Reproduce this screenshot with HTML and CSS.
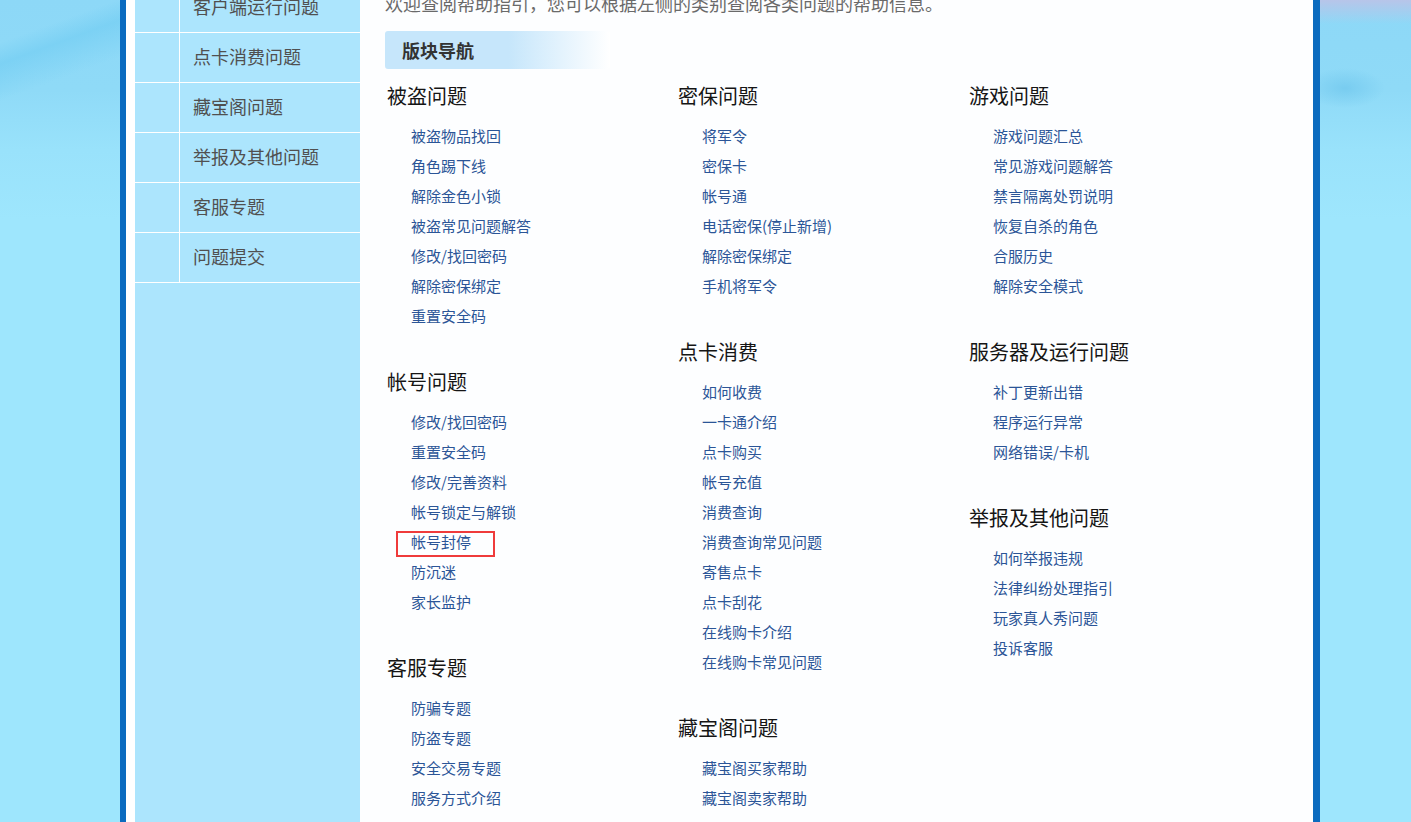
FILE: index.html
```html
<!DOCTYPE html>
<html lang="zh-CN">
<head>
<meta charset="utf-8">
<title>帮助指引</title>
<link rel="stylesheet" href="styles.css">
</head>
<body>
<div class="frame">
  <aside class="sidebar">
    <ul class="side-menu">
      <li><span class="side-icon"></span><a href="#">客户端运行问题</a></li>
      <li><span class="side-icon"></span><a href="#">点卡消费问题</a></li>
      <li><span class="side-icon"></span><a href="#">藏宝阁问题</a></li>
      <li><span class="side-icon"></span><a href="#">举报及其他问题</a></li>
      <li><span class="side-icon"></span><a href="#">客服专题</a></li>
      <li><span class="side-icon"></span><a href="#">问题提交</a></li>
    </ul>
  </aside>
  <main class="content">
    <p class="intro">欢迎查阅帮助指引，您可以根据左侧的类别查阅各类问题的帮助信息。</p>
    <h2 class="nav-title">版块导航</h2>
    <div class="columns">
      <div class="col">
        <section class="block">
          <h3>被盗问题</h3>
          <ul>
            <li><a href="#">被盗物品找回</a></li>
            <li><a href="#">角色踢下线</a></li>
            <li><a href="#">解除金色小锁</a></li>
            <li><a href="#">被盗常见问题解答</a></li>
            <li><a href="#">修改/找回密码</a></li>
            <li><a href="#">解除密保绑定</a></li>
            <li><a href="#">重置安全码</a></li>
          </ul>
        </section>
        <section class="block">
          <h3>帐号问题</h3>
          <ul>
            <li><a href="#">修改/找回密码</a></li>
            <li><a href="#">重置安全码</a></li>
            <li><a href="#">修改/完善资料</a></li>
            <li><a href="#">帐号锁定与解锁</a></li>
            <li class="marked"><a href="#">帐号封停</a><span class="mark-box"></span></li>
            <li><a href="#">防沉迷</a></li>
            <li><a href="#">家长监护</a></li>
          </ul>
        </section>
        <section class="block">
          <h3>客服专题</h3>
          <ul>
            <li><a href="#">防骗专题</a></li>
            <li><a href="#">防盗专题</a></li>
            <li><a href="#">安全交易专题</a></li>
            <li><a href="#">服务方式介绍</a></li>
          </ul>
        </section>
      </div>
      <div class="col">
        <section class="block">
          <h3>密保问题</h3>
          <ul>
            <li><a href="#">将军令</a></li>
            <li><a href="#">密保卡</a></li>
            <li><a href="#">帐号通</a></li>
            <li><a href="#">电话密保(停止新增)</a></li>
            <li><a href="#">解除密保绑定</a></li>
            <li><a href="#">手机将军令</a></li>
          </ul>
        </section>
        <section class="block">
          <h3>点卡消费</h3>
          <ul>
            <li><a href="#">如何收费</a></li>
            <li><a href="#">一卡通介绍</a></li>
            <li><a href="#">点卡购买</a></li>
            <li><a href="#">帐号充值</a></li>
            <li><a href="#">消费查询</a></li>
            <li><a href="#">消费查询常见问题</a></li>
            <li><a href="#">寄售点卡</a></li>
            <li><a href="#">点卡刮花</a></li>
            <li><a href="#">在线购卡介绍</a></li>
            <li><a href="#">在线购卡常见问题</a></li>
          </ul>
        </section>
        <section class="block">
          <h3>藏宝阁问题</h3>
          <ul>
            <li><a href="#">藏宝阁买家帮助</a></li>
            <li><a href="#">藏宝阁卖家帮助</a></li>
          </ul>
        </section>
      </div>
      <div class="col">
        <section class="block">
          <h3>游戏问题</h3>
          <ul>
            <li><a href="#">游戏问题汇总</a></li>
            <li><a href="#">常见游戏问题解答</a></li>
            <li><a href="#">禁言隔离处罚说明</a></li>
            <li><a href="#">恢复自杀的角色</a></li>
            <li><a href="#">合服历史</a></li>
            <li><a href="#">解除安全模式</a></li>
          </ul>
        </section>
        <section class="block">
          <h3>服务器及运行问题</h3>
          <ul>
            <li><a href="#">补丁更新出错</a></li>
            <li><a href="#">程序运行异常</a></li>
            <li><a href="#">网络错误/卡机</a></li>
          </ul>
        </section>
        <section class="block">
          <h3>举报及其他问题</h3>
          <ul>
            <li><a href="#">如何举报违规</a></li>
            <li><a href="#">法律纠纷处理指引</a></li>
            <li><a href="#">玩家真人秀问题</a></li>
            <li><a href="#">投诉客服</a></li>
          </ul>
        </section>
      </div>
    </div>
  </main>
</div>
</body>
</html>
```
FILE: styles.css
```css
* { box-sizing: border-box; }

html, body {
  margin: 0;
  padding: 0;
  height: 100%;
}

body {
  font-family: "Microsoft YaHei", "Noto Sans CJK SC", "Noto Sans", sans-serif;
  background-color: #9ee6fd;
  background-image:
    linear-gradient(160deg, rgba(120, 208, 242, 0) 0px, rgba(120, 208, 242, 0) 40px, rgba(112, 204, 242, 0.6) 60px, rgba(120, 208, 242, 0) 95px),
    linear-gradient(to bottom, rgba(186, 196, 232, 0.95) 0px, rgba(186, 196, 232, 0) 24px),
    radial-gradient(ellipse 40px 20px at 25px 88px, rgba(105, 195, 235, 0.6), rgba(105, 195, 235, 0) 100%),
    linear-gradient(to bottom, #8dd8f7 0px, #8fdaf7 90px, #99e2fb 150px, #9ee6fd 220px);
  background-repeat: no-repeat;
  background-size: 120px 200px, 91px 30px, 91px 200px, 100% 260px;
  background-position: 0 0, right 0 top 0, right 0 top 0, 0 0;
  overflow: hidden;
}

ul { list-style: none; margin: 0; padding: 0; }
a { text-decoration: none; }

.frame {
  position: relative;
  display: flex;
  width: 1200px;
  margin-left: 120px;
  margin-top: -17px;
  min-height: 860px;
  border-left: 6px solid #0b6bbf;
  border-right: 7px solid #0b6bbf;
  padding-left: 9px;
  background: #ffffff;
}

/* sidebar */
.sidebar {
  width: 225px;
  flex: none;
  background: #ace5fd;
}

.side-menu li {
  display: flex;
  height: 50px;
  border-bottom: 1px solid #ffffff;
}

.side-icon {
  width: 45px;
  flex: none;
  border-right: 1px solid #ffffff;
}

.side-menu a {
  display: flex;
  align-items: center;
  padding-left: 13px;
  padding-bottom: 3px;
  font-size: 18px;
  color: #505050;
}

/* main */
.content {
  flex: 1;
  background: #fdfeff;
  padding: 8px 0 0 25px;
}

.intro {
  margin: 0;
  font-size: 18px;
  line-height: 24px;
  color: #6a6a6a;
}

.nav-title {
  margin: 16px 0 0 0;
  width: 225px;
  height: 38px;
  line-height: 38px;
  padding-left: 17px;
  border-radius: 3px;
  font-size: 18px;
  font-weight: bold;
  color: #333333;
  background: linear-gradient(to right, #c6e6fb 0%, #c6e6fb 55%, #ffffff 100%);
}

.columns {
  display: grid;
  grid-template-columns: 291px 291px 291px;
  margin-top: 12px;
  padding-left: 2px;
}

.block { margin-bottom: 36px; }

.block h3 {
  margin: 0;
  font-size: 20px;
  line-height: 30px;
  font-weight: normal;
  color: #151515;
}

.block ul { margin-top: 10px; }

.block li {
  position: relative;
  padding-left: 24px;
  font-size: 15px;
  line-height: 30px;
  height: 30px;
}

.block li a { color: #2b5597; }

.mark-box {
  position: absolute;
  left: 9px;
  top: 4px;
  width: 99px;
  height: 26px;
  border: 2px solid #ef3b3b;
}
```
